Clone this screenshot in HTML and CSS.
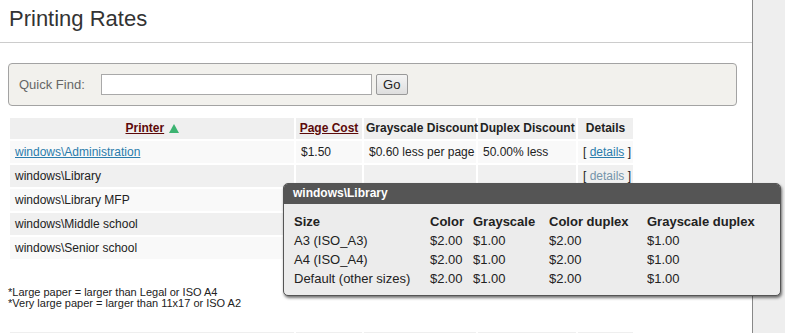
FILE: index.html
```html
<!DOCTYPE html>
<html lang="en">
<head>
    <meta charset="UTF-8">
    <title>Printing Rates</title>
    <link rel="stylesheet" href="styles.css">
</head>
<body>
    <div class="main">
        <header class="page-head">
            <h1>Printing Rates</h1>
        </header>

        <form class="quick-find" onsubmit="return false;">
            <label for="qf">Quick Find:</label>
            <input type="text" id="qf">
            <button type="submit">Go</button>
        </form>

        <table class="rates">
            <colgroup>
                <col class="c-printer"><col class="c-cost"><col class="c-gray"><col class="c-duplex"><col class="c-details">
            </colgroup>
            <thead>
                <tr>
                    <th><a href="#" class="sort">Printer</a>
                        <svg class="arrow" width="10" height="9" viewBox="0 0 10 9"><path d="M5 0 L10 9 L0 9 Z" fill="#3cb371"/></svg>
                    </th>
                    <th><a href="#" class="sort">Page Cost</a></th>
                    <th>Grayscale Discount</th>
                    <th>Duplex Discount</th>
                    <th>Details</th>
                </tr>
            </thead>
            <tbody>
                <tr>
                    <td><a href="#" class="link">windows\Administration</a></td>
                    <td>$1.50</td>
                    <td>$0.60 less per page</td>
                    <td>50.00% less</td>
                    <td>[ <a href="#" class="link">details</a> ]</td>
                </tr>
                <tr>
                    <td>windows\Library</td>
                    <td></td>
                    <td></td>
                    <td></td>
                    <td class="hovered">[ <span>details</span> ]</td>
                </tr>
                <tr>
                    <td>windows\Library MFP</td>
                    <td></td>
                    <td></td>
                    <td></td>
                    <td>[ <a href="#" class="link">details</a> ]</td>
                </tr>
                <tr>
                    <td>windows\Middle school</td>
                    <td></td>
                    <td></td>
                    <td></td>
                    <td>[ <a href="#" class="link">details</a> ]</td>
                </tr>
                <tr>
                    <td>windows\Senior school</td>
                    <td></td>
                    <td></td>
                    <td></td>
                    <td>[ <a href="#" class="link">details</a> ]</td>
                </tr>
            </tbody>
        </table>

        <p class="notes">*Large paper = larger than Legal or ISO A4<br>*Very large paper = larger than 11x17 or ISO A2</p>

        <table class="rates">
            <colgroup>
                <col class="c-printer"><col class="c-cost"><col class="c-gray"><col class="c-duplex"><col class="c-details">
            </colgroup>
            <thead>
                <tr>
                    <th>Printer</th>
                    <th>Page Cost</th>
                    <th>Grayscale Discount</th>
                    <th>Duplex Discount</th>
                    <th>Details</th>
                </tr>
            </thead>
        </table>

        <div class="popup">
            <div class="popup-title">windows\Library</div>
            <div class="popup-body">
                <table class="sizes">
                    <tr>
                        <th class="s-size">Size</th>
                        <th class="s-color">Color</th>
                        <th class="s-gray">Grayscale</th>
                        <th class="s-cdup">Color duplex</th>
                        <th>Grayscale duplex</th>
                    </tr>
                    <tr><td>A3 (ISO_A3)</td><td>$2.00</td><td>$1.00</td><td>$2.00</td><td>$1.00</td></tr>
                    <tr><td>A4 (ISO_A4)</td><td>$2.00</td><td>$1.00</td><td>$2.00</td><td>$1.00</td></tr>
                    <tr><td>Default (other sizes)</td><td>$2.00</td><td>$1.00</td><td>$2.00</td><td>$1.00</td></tr>
                </table>
            </div>
        </div>
    </div>
    <div class="side"></div>
</body>
</html>
```

FILE: styles.css
```css
body {
    margin: 0;
    font-family: 'Liberation Sans', Arial, sans-serif;
    color: #222;
    display: flex;
    min-height: 100vh;
    overflow: hidden;
}

.main {
    width: 752px;
    border-right: 1px solid #888;
    position: relative;
    background: #fff;
}

.side {
    flex: 1;
    background: #eee;
}

.page-head {
    padding: 6px 9px 11px;
    border-bottom: 1px solid #ccc;
}

.page-head h1 {
    margin: 0;
    font-size: 22px;
    line-height: 25px;
    font-weight: normal;
    color: #333;
}

.quick-find {
    margin: 20px 15px 0 8px;
    height: 41px;
    background: #f2f1ed;
    border: 1px solid #a3a3a3;
    border-radius: 4px;
    display: flex;
    align-items: center;
    padding-left: 10px;
}

.quick-find label {
    font-size: 13px;
    color: #666;
    margin-right: 16px;
}

.quick-find input {
    width: 271px;
    height: 21px;
    box-sizing: border-box;
    border: 1px solid #a9a9a9;
    background: #fff;
    margin: 0 4px 0 0;
    padding: 0 3px;
}

.quick-find button {
    width: 32px;
    height: 21px;
    box-sizing: border-box;
    font-family: inherit;
    font-size: 13px;
    color: #222;
    padding: 0;
    border: 1px solid #999;
    border-radius: 2px;
    background: linear-gradient(#f4f4f4, #dedede);
}

.rates {
    margin: 10px 0 0 8px;
    width: 627px;
    table-layout: fixed;
    border-spacing: 2px;
    font-size: 12px;
}

.c-printer { width: 284px; }
.c-cost { width: 66px; }
.c-gray { width: 112px; }
.c-duplex { width: 98px; }
.c-details { width: 55px; }

.rates th {
    background: #efefef;
    padding: 3px 2px 4px;
    line-height: 14px;
    font-weight: bold;
    text-align: center;
    white-space: nowrap;
}

.rates td {
    padding: 4px 5px;
    line-height: 14px;
    white-space: nowrap;
    background: #f9f9f9;
}

.rates tbody tr:nth-child(even) td {
    background: #f0f0f0;
}

.sort {
    color: #5c0a0a;
    text-decoration: underline;
}

.arrow {
    vertical-align: -1px;
    margin-left: 1px;
}

.link {
    color: #2a7cac;
    text-decoration: underline;
}

.hovered span {
    color: #7594aa;
}

.notes {
    margin: 26px 0 0 8px;
    font-size: 11px;
    line-height: 11px;
}

.notes + .rates {
    margin-top: 21px;
}

.popup {
    position: absolute;
    left: 283px;
    top: 183px;
    width: 496px;
    border: 1px solid #555;
    border-radius: 5px;
    background: #ececec;
    box-shadow: 1px 2px 3px rgba(0, 0, 0, 0.55);
    overflow: hidden;
}

.popup-title {
    background: #555;
    color: #fff;
    font-size: 12px;
    font-weight: bold;
    height: 20px;
    line-height: 19px;
    padding-left: 9px;
}

.popup-body {
    padding: 8px 10px 7px;
}

.sizes {
    border-spacing: 0;
    font-size: 13px;
    line-height: 19px;
}

.sizes th,
.sizes td {
    padding: 0;
    text-align: left;
    white-space: nowrap;
}

.sizes th {
    font-weight: bold;
}

.s-size { width: 136px; }
.s-color { width: 43px; }
.s-gray { width: 76px; }
.s-cdup { width: 98px; }
```
